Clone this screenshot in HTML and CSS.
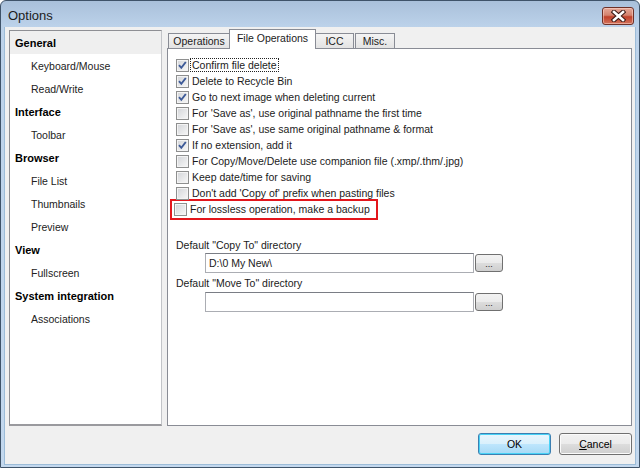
FILE: index.html
```html
<!DOCTYPE html>
<html lang="en">
  <head>
    <meta charset="UTF-8" />
    <title>Options</title>
    <link rel="stylesheet" href="styles.css">
  </head>
  <body>
    <main class="window">
      <header class="titlebar">
        <span class="title">Options</span>
        <div class="close">
          <svg width="15" height="12" viewBox="0 0 15 12">
            <path d="M3 2 L12 10 M12 2 L3 10" stroke="#3b1a16" stroke-width="4.6" stroke-linecap="square" fill="none"/>
            <path d="M3 2 L12 10 M12 2 L3 10" stroke="#ffffff" stroke-width="2.6" stroke-linecap="square" fill="none"/>
          </svg>
        </div>
      </header>

      <section class="client">
        <div class="main">
          <ul class="tree">
            <li class="group selected">General</li>
            <li class="item">Keyboard/Mouse</li>
            <li class="item">Read/Write</li>
            <li class="group">Interface</li>
            <li class="item">Toolbar</li>
            <li class="group">Browser</li>
            <li class="item">File List</li>
            <li class="item">Thumbnails</li>
            <li class="item">Preview</li>
            <li class="group">View</li>
            <li class="item">Fullscreen</li>
            <li class="group">System integration</li>
            <li class="item">Associations</li>
          </ul>

          <div class="tabs">
            <div class="tabstrip">
              <div class="tab tab-ops">Operations</div>
              <div class="tab active">File Operations</div>
              <div class="tab tab-icc">ICC</div>
              <div class="tab tab-misc">Misc.</div>
            </div>
            <div class="page">
              <div class="row"><span class="check on"></span><span class="label focus">Confirm file delete</span></div>
              <div class="row"><span class="check on"></span><span class="label">Delete to Recycle Bin</span></div>
              <div class="row"><span class="check on"></span><span class="label">Go to next image when deleting current</span></div>
              <div class="row"><span class="check"></span><span class="label">For 'Save as', use original pathname the first time</span></div>
              <div class="row"><span class="check"></span><span class="label">For 'Save as', use same original pathname &amp; format</span></div>
              <div class="row"><span class="check on"></span><span class="label">If no extension, add it</span></div>
              <div class="row"><span class="check"></span><span class="label">For Copy/Move/Delete use companion file (.xmp/.thm/.jpg)</span></div>
              <div class="row"><span class="check"></span><span class="label">Keep date/time for saving</span></div>
              <div class="row"><span class="check"></span><span class="label">Don't add 'Copy of' prefix when pasting files</span></div>
              <div class="row marked"><span class="check"></span><span class="label">For lossless operation, make a backup</span></div>

              <div class="field first">
                <div class="field-label">Default "Copy To" directory</div>
                <div class="field-row">
                  <div class="input">D:\0 My New\</div>
                  <div class="browse">...</div>
                </div>
              </div>
              <div class="field">
                <div class="field-label">Default "Move To" directory</div>
                <div class="field-row">
                  <div class="input"></div>
                  <div class="browse">...</div>
                </div>
              </div>
            </div>
          </div>
        </div>

        <div class="buttons">
          <button class="btn default">OK</button>
          <button class="btn"><u>C</u>ancel</button>
        </div>
      </section>
    </main>
  </body>
</html>
```

FILE: styles.css
```css
* {
  padding: 0;
  margin: 0;
  box-sizing: border-box;
}

body {
  width: 640px;
  height: 468px;
  overflow: hidden;
  font-family: "Liberation Sans", Arial, sans-serif;
  font-size: 10.5px;
  color: #1b1b1b;
}

.window {
  width: 640px;
  height: 468px;
  display: flex;
  flex-direction: column;
  border: 1px solid #3f5369;
  border-radius: 6px 6px 0 0;
  background: linear-gradient(#a9c0da, #bcd2ea 26px, #c3d8ee);
}

.titlebar {
  height: 26px;
  display: flex;
  align-items: center;
  justify-content: space-between;
  padding: 0 5px 0 7px;
}

.title {
  font-size: 13px;
  color: #1c1c1c;
  padding-top: 2px;
}

.close {
  width: 32px;
  height: 18px;
  margin-top: 4px;
  display: flex;
  align-items: center;
  justify-content: center;
  border: 1px solid #6e3128;
  border-radius: 3px;
  background: linear-gradient(#e5a898, #d4826e 45%, #c0402a 55%, #d2735c);
  box-shadow: inset 0 0 0 1px rgba(255, 220, 210, 0.5);
}

.close svg {
  display: block;
}

.client {
  flex: 1;
  margin: 0 3px 2px;
  padding: 3px 3px 9px 4px;
  background: #f0f0f0;
  border: 1px solid #9cbcd8;
  border-top: none;
  display: flex;
  flex-direction: column;
}

.main {
  height: 396px;
  display: flex;
  gap: 5px;
}

/* left tree */

.tree {
  width: 153px;
  list-style: none;
  background: white;
  border: 1px solid #8e8f94;
  border-right-color: #c2c4c8;
  border-bottom: 2px solid #9a9a9e;
}

.tree li {
  height: 23px;
  line-height: 23px;
  padding-top: 1px;
  white-space: nowrap;
}

.group {
  padding-left: 5px;
  font-weight: bold;
  font-size: 11px;
  color: #000;
}

.item {
  padding-left: 21px;
  color: #222;
}

.selected {
  background: #efefef;
}

/* tabs */

.tabs {
  flex: 1;
  display: flex;
  flex-direction: column;
}

.tabstrip {
  height: 18px;
  display: flex;
  align-items: flex-end;
  padding-left: 1px;
}

.tab {
  height: 15px;
  line-height: 14px;
  text-align: center;
  border: 1px solid #898c95;
  border-bottom: none;
  background: linear-gradient(#f4f4f4, #e3e3e3);
  white-space: nowrap;
}

.tab-ops {
  width: 61px;
  border-right: none;
}

.tab-icc {
  width: 38px;
  border-left: none;
}

.tab-misc {
  width: 40px;
  margin-left: 1px;
}

.tab.active {
  width: 87px;
  height: 20px;
  line-height: 17px;
  margin-bottom: -1px;
  background: white;
  position: relative;
  z-index: 1;
}

.page {
  flex: 1;
  background: white;
  border: 1px solid #898c95;
  padding: 8px 8px 0;
}

.row {
  height: 16px;
  display: flex;
  align-items: center;
  gap: 3px;
  white-space: nowrap;
}

.check {
  width: 13px;
  height: 13px;
  flex: none;
  border: 1px solid #8e8f8f;
  background: linear-gradient(135deg, #d2d4d8, #f8f8f8);
  box-shadow: inset 0 0 0 1px #f4f4f4;
}

.check.on {
  background-image: url("data:image/svg+xml;utf8,<svg xmlns='http://www.w3.org/2000/svg' width='11' height='11' viewBox='0 0 11 11'><path d='M2 5.2 L4.3 7.8 L8.8 2' stroke='%233d5a98' stroke-width='1.9' fill='none'/></svg>"), linear-gradient(135deg, #d2d4d8, #f8f8f8);
}

.focus {
  outline: 1px dotted #222;
  outline-offset: 0;
  padding: 0 1px;
  margin-left: -1px;
}

.marked {
  width: fit-content;
  height: 21px;
  border: 2px solid #e3161c;
  margin: -2px 0 -3px -6px;
  padding: 0 6px 1px 2px;
}

.field.first {
  margin-top: 20px;
}

.field-label {
  height: 16px;
  line-height: 16px;
}

.field + .field .field-label {
  margin-top: 2px;
  margin-bottom: 1px;
}

.field-row {
  display: flex;
  align-items: center;
  gap: 1px;
  padding-left: 29px;
}

.input {
  width: 269px;
  height: 20px;
  line-height: 18px;
  padding-left: 3px;
  border: 1px solid #abadb3;
  border-top-color: #7a7d85;
  background: white;
}

.browse {
  width: 28px;
  height: 18px;
  line-height: 18px;
  text-align: center;
  font-size: 9px;
  border: 1px solid #707070;
  border-radius: 3px;
  background: linear-gradient(#f2f2f2, #ebebeb 50%, #dddddd 50%, #cfcfcf);
}

/* dialog buttons */

.buttons {
  margin-top: 7px;
  display: flex;
  justify-content: flex-end;
  gap: 8px;
}

.btn {
  width: 73px;
  height: 22px;
  font-family: "Liberation Sans", Arial, sans-serif;
  font-size: 10.5px;
  color: #000;
  border: 1px solid #707070;
  border-radius: 3px;
  background: linear-gradient(#f2f2f2, #ebebeb 50%, #dddddd 50%, #cfcfcf);
  box-shadow: inset 0 0 0 1px #fbfbfb;
}

.btn.default {
  border-color: #3c7fb1;
  background: linear-gradient(#eaf6fd, #d9f0fc 50%, #bee6fd 50%, #a7d9f5);
  box-shadow: inset 0 0 0 1px #48d2f6;
}
```
